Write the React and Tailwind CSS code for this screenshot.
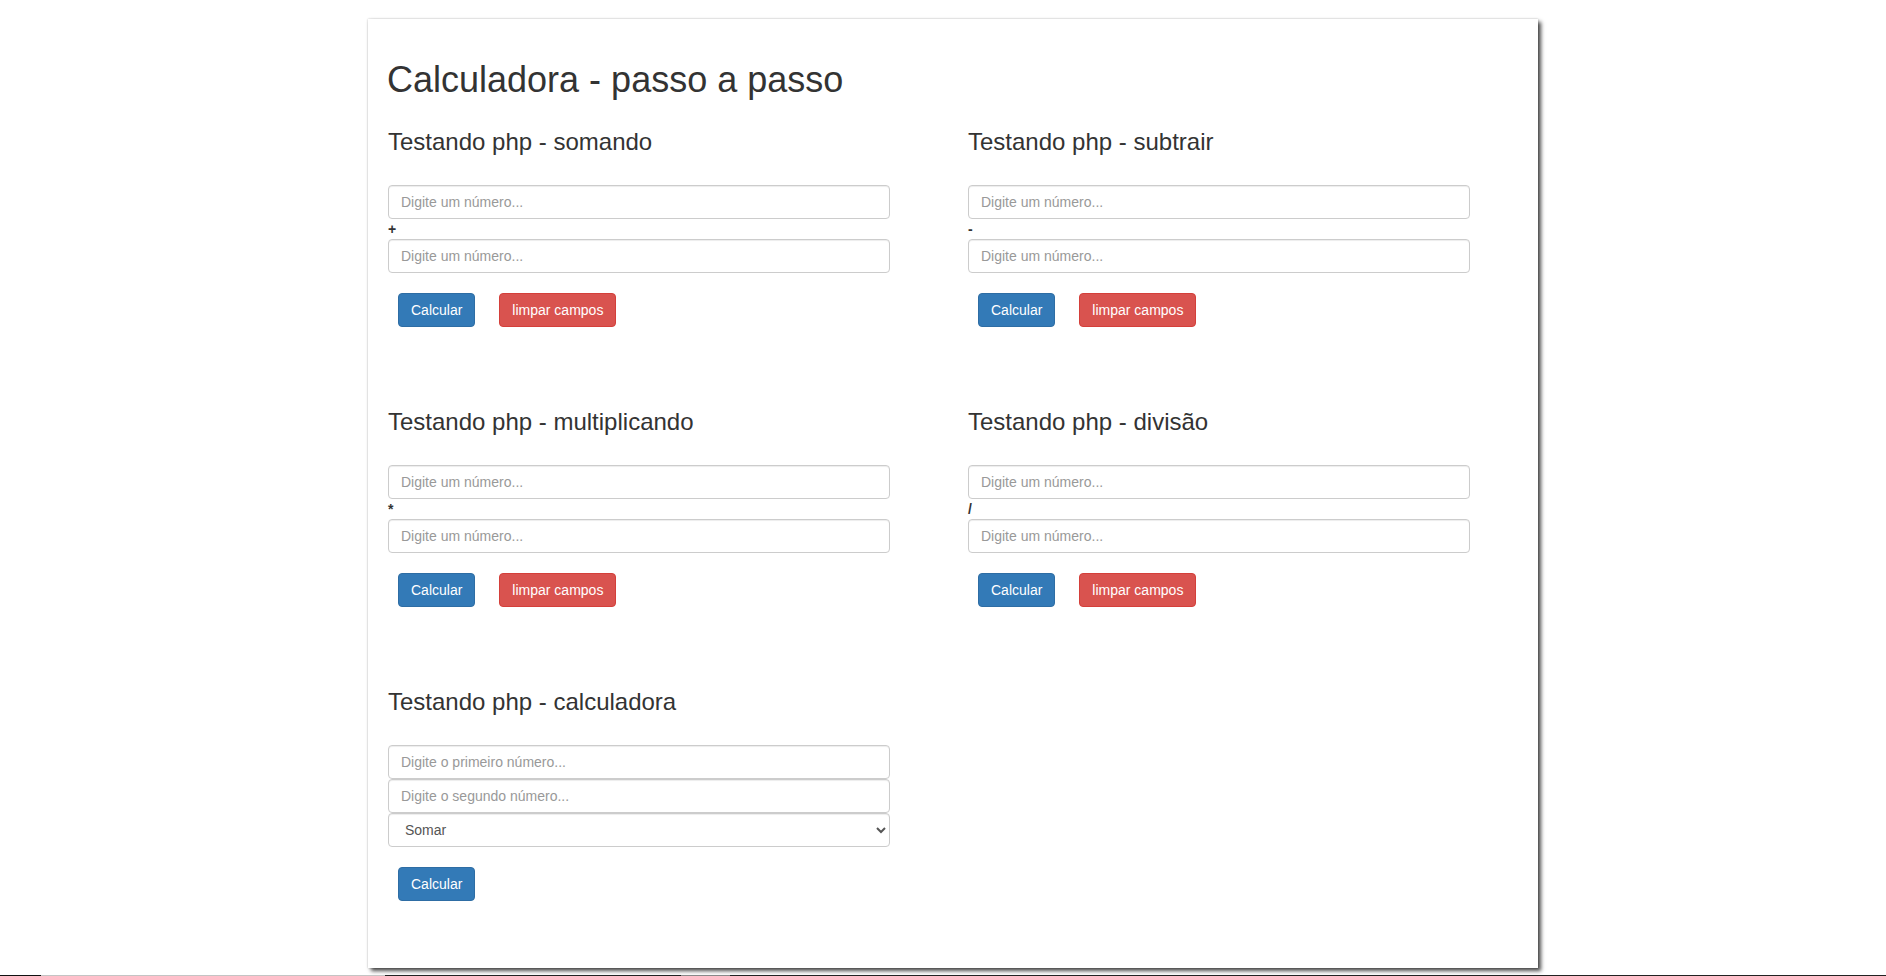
import React from "react";

const font = { fontFamily: '"Liberation Sans", Arial, Helvetica, sans-serif' };

function Input({ placeholder }) {
  return (
    <input
      type="text"
      placeholder={placeholder}
      className="block h-[34px] w-[502px] rounded-[4px] border border-[#ccc] bg-white px-[12px] py-[6px] text-[14px] leading-[20px] text-[#555] shadow-[inset_0_1px_1px_rgba(0,0,0,0.075)] outline-none placeholder:text-[#999]"
    />
  );
}

function Buttons({ clear = true }) {
  return (
    <div className="mt-[20px] flex gap-[24px] pl-[10px]">
      <button className="h-[34px] rounded-[4px] border border-[#2e6da4] bg-[#337ab7] px-[12px] text-[14px] leading-[20px] text-white">
        Calcular
      </button>
      {clear && (
        <button className="h-[34px] rounded-[4px] border border-[#d43f3a] bg-[#d9534f] px-[12px] text-[14px] leading-[20px] text-white">
          limpar campos
        </button>
      )}
    </div>
  );
}

function Section({ title, op }) {
  return (
    <div>
      <h3 className="text-[24px] font-normal leading-[1.1] text-[#333]">{title}</h3>
      <div className="mt-[30px]">
        <Input placeholder="Digite um número..." />
        <div className="h-[20px] text-[14px] font-bold leading-[20px] text-[#333]">{op}</div>
        <Input placeholder="Digite um número..." />
      </div>
      <Buttons />
    </div>
  );
}

export default function App() {
  return (
    <div className="relative flex h-[976px] w-full flex-col overflow-hidden bg-white" style={font}>
      <div className="ml-[368px] mt-[19px] w-[1170px] bg-white pb-[67px] pl-[20px] pt-[41px] shadow-[3px_3px_4px_rgba(0,0,0,0.7),0_0_2px_rgba(0,0,0,0.25)]">
        <h1 className="-ml-[1px] text-[36px] font-normal leading-[1.1] text-[#333]">
          Calculadora - passo a passo
        </h1>
        <div className="mt-[29px] grid grid-cols-[580px_1fr] gap-y-[81.6px]">
          <Section title="Testando php - somando" op="+" />
          <Section title="Testando php - subtrair" op="-" />
          <Section title="Testando php - multiplicando" op="*" />
          <Section title="Testando php - divisão" op="/" />
          <div>
            <h3 className="text-[24px] font-normal leading-[1.1] text-[#333]">
              Testando php - calculadora
            </h3>
            <div className="mt-[30px]">
              <Input placeholder="Digite o primeiro número..." />
              <Input placeholder="Digite o segundo número..." />
              <select className="block h-[34px] w-[502px] rounded-[4px] border border-[#ccc] bg-white px-[12px] text-[14px] text-[#555] shadow-[inset_0_1px_1px_rgba(0,0,0,0.075)] outline-none">
                <option>Somar</option>
                <option>Subtrair</option>
                <option>Multiplicar</option>
                <option>Dividir</option>
              </select>
            </div>
            <Buttons clear={false} />
          </div>
        </div>
      </div>
      <div className="mt-auto flex h-[1px] w-full">
        <div className="w-[41px] bg-[#111]" />
        <div className="w-[344px] bg-[#c4c4c4]" />
        <div className="w-[296px] bg-[#222]" />
        <div className="w-[49px] bg-[#888]" />
        <div className="flex-1 bg-[#222]" />
      </div>
    </div>
  );
}
